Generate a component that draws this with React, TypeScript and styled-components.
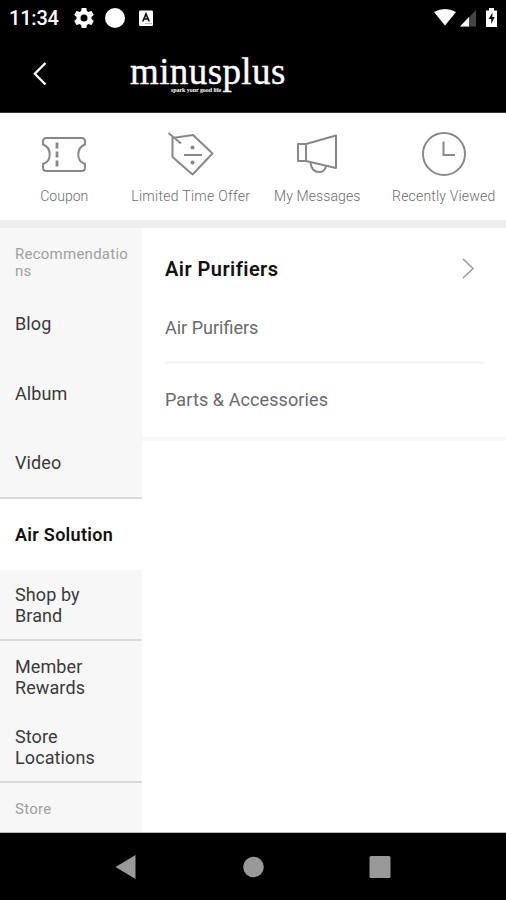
import React from "react";
import styled, { createGlobalStyle } from "styled-components";

const GlobalStyle = createGlobalStyle`
  * { box-sizing: border-box; }
  body { margin: 0; background: #fff; font-family: Roboto, "Open Sans", sans-serif; }
  svg { display: block; flex: none; }
`;

const Screen = styled.div`
  display: flex;
  flex-direction: column;
  width: 506px;
  height: 900px;
  overflow: hidden;
  background: #fff;
`;

const StatusBar = styled.div`
  display: flex;
  align-items: center;
  height: 36px;
  padding: 0 7px 0 9px;
  background: #000;
  color: #fff;
`;

const Clock = styled.span`
  width: 65px;
  font-size: 20px;
  font-weight: 500;
  line-height: 36px;
  letter-spacing: -0.2px;
  white-space: nowrap;
`;

const StatusIcons = styled.div`
  display: flex;
  align-items: center;
  gap: 11px;
  margin-top: -1px;
`;

const Spacer = styled.div`
  flex: 1;
`;

const Header = styled.header`
  display: flex;
  align-items: flex-start;
  height: 77px;
  padding-left: 32px;
  background: #000;
  border-bottom: 1px solid #333;
`;

const BackButton = styled.button`
  margin: 25px 0 0;
  padding: 0;
  border: 0;
  background: none;
`;

const Logo = styled.div`
  display: flex;
  flex-direction: column;
  margin: 15px 0 0 81px;
  color: #fff;
  font-family: "Liberation Serif", serif;
`;

const LogoName = styled.span`
  font-size: 37px;
  line-height: 42px;
  letter-spacing: 0.4px;
  -webkit-text-stroke: 0.4px #fff;
`;

const Tagline = styled.span`
  margin: -6px 0 0 41px;
  font-size: 6px;
  line-height: 7px;
  font-weight: 700;
  letter-spacing: -0.06px;
  white-space: nowrap;
`;

const Shortcuts = styled.nav`
  display: grid;
  grid-template-columns: repeat(4, 1fr);
  height: 107px;
  padding-left: 1px;
  margin-right: -1px;
`;

const Shortcut = styled.div`
  display: flex;
  flex-direction: column;
  align-items: center;
  padding-top: 17px;
`;

const ShortcutLabel = styled.span<{ $spacing: number }>`
  margin-top: 8px;
  font-size: 14px;
  line-height: 20px;
  font-weight: 300;
  letter-spacing: ${(p) => p.$spacing}px;
  color: #6c6c6c;
  white-space: nowrap;
`;

const Band = styled.div`
  height: 8px;
  background: #eee;
`;

const Body = styled.div`
  display: flex;
  height: 605px;
  border-bottom: 1px solid #bbb;
`;

const Sidebar = styled.aside`
  width: 142px;
  height: 100%;
  background: #f7f7f7;
  overflow: hidden;
`;

const Heading = styled.div<{ $height: number }>`
  height: ${(p) => p.$height}px;
  padding: 18px 12px 0 15px;
  font-size: 15px;
  line-height: 17px;
  letter-spacing: 0.25px;
  font-weight: 400;
  color: #a0a0a0;
  word-break: break-all;
`;

const MenuItem = styled.div<{ $height: number; $active?: boolean; $line?: boolean }>`
  display: flex;
  align-items: center;
  height: ${(p) => p.$height}px;
  padding: 0 30px 0 15px;
  background: ${(p) => (p.$active ? "#fff" : "#f7f7f7")};
  border-bottom: ${(p) => (p.$line ? "2px solid #dadada" : "0")};
  font-size: 18px;
  line-height: 21px;
  letter-spacing: ${(p) => (p.$active ? 0.3 : 0.1)}px;
  font-weight: ${(p) => (p.$active ? 600 : 400)};
  white-space: ${(p) => (p.$active ? "nowrap" : "normal")};
  color: ${(p) => (p.$active ? "#111" : "#3a3a3a")};
`;

const Content = styled.main`
  flex: 1;
`;

const Panel = styled.section`
  height: 213px;
  padding: 1px 22px 0 23px;
  border-bottom: 4px solid #f7f7f7;
`;

const PanelTitle = styled.div`
  display: flex;
  align-items: center;
  justify-content: space-between;
  height: 80px;
  padding-right: 9px;
  font-size: 20px;
  font-weight: 600;
  letter-spacing: 0.45px;
  color: #111;
`;

const PanelRow = styled.div<{ $height: number; $line?: boolean }>`
  height: ${(p) => p.$height}px;
  padding-top: ${(p) => (p.$line ? 7 : 24)}px;
  border-bottom: ${(p) => (p.$line ? "3px solid #f6f6f6" : "0")};
  font-size: 18px;
  line-height: 24px;
  letter-spacing: ${(p) => (p.$line ? 0 : 0.1)}px;
  color: #6a6a6a;
`;

const NavBar = styled.footer`
  display: grid;
  grid-template-columns: repeat(3, 127px);
  justify-content: center;
  justify-items: center;
  align-items: center;
  height: 67px;
  background: #000;
`;

const CouponIcon = () => (
  <svg width="48" height="48" viewBox="0 0 48 48" fill="none" stroke="#888" strokeWidth="2">
    <path d="M6.500 8H41.500Q45 8 45 11.500V14.500C36 18 36 31 45 34V37.500Q45 41 41.500 41H6.500Q3 41 3 37.500V34C12 31 12 18 3 14.500V11.500Q3 8 6.500 8Z" />
    <path d="M17 12.500V18.500M17 21.500V27.500M17 30.500V36.500" strokeWidth="2.800" />
  </svg>
);

const OfferIcon = () => (
  <svg width="48" height="48" viewBox="0 0 48 48" fill="none" stroke="#888" strokeWidth="2">
    <path d="M5.500 8L26 5L45.500 23.500L25.500 44.500L5.500 27Z" strokeLinejoin="round" />
    <path d="M1.500 3L14 13.500M17 25H35" />
    <circle cx="25.500" cy="17.500" r="2" fill="#888" stroke="none" />
    <circle cx="25.500" cy="32.500" r="2" fill="#888" stroke="none" />
  </svg>
);

const MessageIcon = () => (
  <svg width="48" height="48" viewBox="0 0 48 48" fill="none" stroke="#888" strokeWidth="2" strokeLinejoin="round">
    <path d="M5 14H13V31H5ZM13 14L43 5.500V38L13 31" />
    <path d="M17.500 33C19 44.500 32 44.500 33 36" />
  </svg>
);

const RecentIcon = () => (
  <svg width="48" height="48" viewBox="0 0 48 48" fill="none" stroke="#888" strokeWidth="2">
    <circle cx="24" cy="24" r="21" />
    <path d="M23.500 11.500V25H35" />
  </svg>
);

const shortcuts = [
  { label: "Coupon", icon: <CouponIcon />, spacing: 0 },
  { label: "Limited Time Offer", icon: <OfferIcon />, spacing: 0.28 },
  { label: "My Messages", icon: <MessageIcon />, spacing: 0.1 },
  { label: "Recently Viewed", icon: <RecentIcon />, spacing: 0.18 },
];

const menu = [
  { label: "Blog", height: 70 },
  { label: "Album", height: 70 },
  { label: "Video", height: 71, line: true },
  { label: "Air Solution", height: 71, active: true },
  { label: "Shop by Brand", height: 71, line: true },
  { label: "Member Rewards", height: 71 },
  { label: "Store Locations", height: 71, line: true },
];

export default function App() {
  return (
    <>
      <GlobalStyle />
      <Screen>
        <StatusBar>
          <Clock>11:34</Clock>
          <StatusIcons>
            <svg width="20" height="20" viewBox="2 2 20 20" fill="#fff">
              <path d="M19.430 12.980c.04-.32.07-.64.07-.98s-.03-.66-.07-.98l2.110-1.650c.19-.15.24-.42.12-.64l-2-3.460c-.12-.22-.39-.3-.61-.22l-2.490 1c-.52-.4-1.080-.73-1.690-.98l-.38-2.650A.49.49 0 0 0 14 2h-4c-.25 0-.46.18-.49.42l-.38 2.650c-.61.25-1.170.59-1.690.98l-2.490-1c-.23-.09-.49 0-.61.22l-2 3.460c-.13.22-.07.49.12.64l2.110 1.650c-.04.32-.07.65-.07.98s.03.66.07.98l-2.110 1.650c-.19.15-.24.42-.12.64l2 3.460c.12.22.39.3.61.22l2.490-1c.52.4 1.080.73 1.690.98l.38 2.650c.03.24.24.42.49.42h4c.25 0 .46-.18.49-.42l.38-2.650c.61-.25 1.170-.59 1.690-.98l2.490 1c.23.09.49 0 .61-.22l2-3.460c.12-.22.07-.49-.12-.64zM12 15.500a3.500 3.500 0 1 1 0-7 3.500 3.500 0 0 1 0 7z" />
            </svg>
            <svg width="20" height="20"><circle cx="10" cy="10" r="10" fill="#fff" /></svg>
            <svg width="20" height="20" viewBox="0 0 20 20">
              <rect x="3" y="2.500" width="14" height="15.500" rx="1.200" fill="#fff" />
              <path d="M6.800 13.500L10 6L13.200 13.500M8 11H12" fill="none" stroke="#111" strokeWidth="1.700" />
              <path d="M9 15.700H16" stroke="#aaa" />
            </svg>
          </StatusIcons>
          <Spacer />
          <svg width="65" height="22" viewBox="0 0 65 22">
            <path d="M0 5Q11 -1 22 5L11 18.500Z" fill="#fff" />
            <path d="M26 19.500L42 3V19.500Z" fill="#444" />
            <path d="M26 19.500L35 10V19.500Z" fill="#fff" />
            <path d="M52 3.500H55V1H60V3.500H63V20H52Z" fill="#fff" />
            <path d="M58.500 5.500L54.500 12H57.200V17L60.800 10H58.300Z" fill="#111" />
          </svg>
        </StatusBar>
        <Header>
          <BackButton aria-label="Back">
            <svg width="17" height="26" viewBox="0 0 17 26" fill="none" stroke="#fff" strokeWidth="2.300">
              <path d="M13.500 2L2.800 12.800L13.500 23.500" />
            </svg>
          </BackButton>
          <Logo>
            <LogoName>minusplus</LogoName>
            <Tagline>spark your good life</Tagline>
          </Logo>
        </Header>
        <Shortcuts>
          {shortcuts.map((s) => (
            <Shortcut key={s.label}>
              {s.icon}
              <ShortcutLabel $spacing={s.spacing}>{s.label}</ShortcutLabel>
            </Shortcut>
          ))}
        </Shortcuts>
        <Band />
        <Body>
          <Sidebar>
            <Heading $height={60}>Recommendations</Heading>
            {menu.map((m) => (
              <MenuItem key={m.label} $height={m.height} $active={m.active} $line={m.line}>
                {m.label}
              </MenuItem>
            ))}
            <Heading $height={51}>Store</Heading>
          </Sidebar>
          <Content>
            <Panel>
              <PanelTitle>
                Air Purifiers
                <svg width="15" height="24" viewBox="0 0 15 24" fill="none" stroke="#999" strokeWidth="1.500">
                  <path d="M3 2L13 11.500L3 21" />
                </svg>
              </PanelTitle>
              <PanelRow $height={55} $line>Air Purifiers</PanelRow>
              <PanelRow $height={70}>Parts &amp; Accessories</PanelRow>
            </Panel>
          </Content>
        </Body>
        <NavBar>
          <svg width="22" height="24"><path d="M0.500 12L20.500 0V24Z" fill="#999" /></svg>
          <svg width="22" height="22"><circle cx="11.500" cy="11" r="10.300" fill="#999" /></svg>
          <svg width="22" height="22"><rect x="0.500" width="21" height="22" rx="1.500" fill="#999" /></svg>
        </NavBar>
      </Screen>
    </>
  );
}
